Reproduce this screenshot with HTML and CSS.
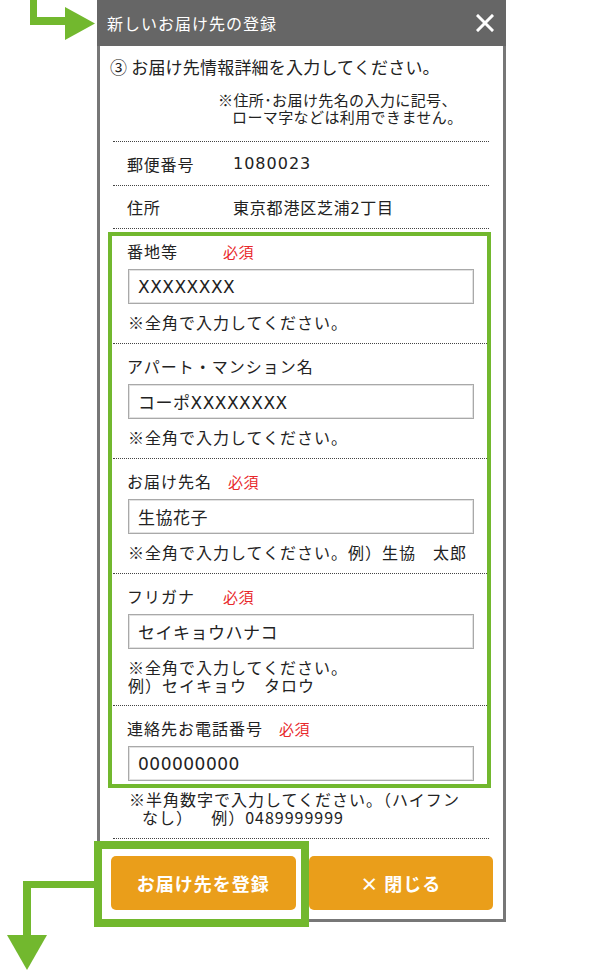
FILE: index.html
```html
<!DOCTYPE html>
<html lang="ja">
<head>
<meta charset="utf-8">
<title>新しいお届け先の登録</title>
<link rel="stylesheet" href="styles.css">
</head>
<body>
<div class="page">
  <div class="modal">
    <div class="modal-head">
      <span class="modal-title">新しいお届け先の登録</span>
      <svg class="close-icon" width="18" height="18" viewBox="0 0 18 18"><path d="M2 2L16 16M16 2L2 16" stroke="#fff" stroke-width="3" stroke-linecap="square"/></svg>
    </div>
    <div class="modal-body">
      <div class="content">
        <p class="intro">③ お届け先情報詳細を入力してください。</p>
        <p class="caution">※住所･お届け先名の入力に記号、<br>ローマ字などは利用できません。</p>

        <div class="info-row"><span class="info-label">郵便番号</span><span class="info-value num">1080023</span></div>
        <div class="info-row info-row-2"><span class="info-label">住所</span><span class="info-value">東京都港区芝浦2丁目</span></div>

        <div class="field">
          <div class="field-label"><span class="label-text">番地等</span><span class="req">必須</span></div>
          <input class="field-input" type="text" value="XXXXXXXX">
          <p class="field-note">※全角で入力してください。</p>
        </div>
        <div class="field">
          <div class="field-label"><span class="label-text">アパート・マンション名</span></div>
          <input class="field-input" type="text" value="コーポXXXXXXXX">
          <p class="field-note">※全角で入力してください。</p>
        </div>
        <div class="field">
          <div class="field-label"><span class="label-text">お届け先名</span><span class="req">必須</span></div>
          <input class="field-input" type="text" value="生協花子">
          <p class="field-note">※全角で入力してください。例）生協　太郎</p>
        </div>
        <div class="field field-two-line">
          <div class="field-label"><span class="label-text">フリガナ</span><span class="req">必須</span></div>
          <input class="field-input" type="text" value="セイキョウハナコ">
          <p class="field-note">※全角で入力してください。<br>例）セイキョウ　タロウ</p>
        </div>
        <div class="field field-last">
          <div class="field-label"><span class="label-text">連絡先お電話番号</span><span class="req">必須</span></div>
          <input class="field-input" type="text" value="000000000">
          <p class="field-note field-note-hang">※半角数字で入力してください。（ハイフン<br>なし）　&nbsp;&nbsp;例）0489999999</p>
        </div>
      </div>
      <div class="actions">
        <button class="btn" type="button">お届け先を登録</button>
        <button class="btn" type="button">× 閉じる</button>
      </div>
    </div>
  </div>

  <svg class="arrow-top" width="100" height="45" viewBox="0 0 100 45"><path d="M30 0H37V17H66V25H30Z" fill="#72b82e"/><path d="M65 7L95 23.5L65 40Z" fill="#72b82e"/></svg>
  <div class="mark-fields"></div>
  <div class="mark-button"></div>
  <svg class="arrow-bottom" width="100" height="100" viewBox="0 0 100 100"><path d="M23 0H96V7H31V56H23Z" fill="#72b82e"/><path d="M7 54H47L27 89Z" fill="#72b82e"/></svg>
</div>
</body>
</html>
```
FILE: styles.css
```css
* { box-sizing: border-box; }
html, body { margin: 0; padding: 0; background: #fff; }
body {
  font-family: "Noto Sans CJK JP", "Noto Sans", sans-serif;
  color: #222;
}
.page {
  position: relative;
  width: 600px;
  height: 977px;
  padding-left: 97px;
}
.modal { width: 409px; }
.modal-head {
  height: 46px;
  background: #666;
  display: flex;
  align-items: center;
  justify-content: space-between;
  padding: 0 12px 0 10px;
}
.modal-title {
  color: #fff;
  font-size: 16px;
  letter-spacing: 1px;
  line-height: 22px;
}
.close-icon { display: block; }
.modal-body {
  border: 3px solid #777;
  border-top: 0;
  background: #fff;
}
.content { padding: 0 14px 0 13px; }
.intro {
  margin: 0 0 0 -3px;
  padding-top: 10px;
  font-size: 17px;
  line-height: 22px;
  letter-spacing: 0.2px;
}
.caution {
  margin: 13px 0 0 105px;
  padding: 0 0 16px 14px;
  text-indent: -14px;
  font-size: 15px;
  line-height: 17px;
  letter-spacing: 0.4px;
  white-space: nowrap;
}
.info-row {
  border-top: 1px dotted #444;
  height: 44px;
  display: flex;
  align-items: center;
  padding-left: 14px;
  font-size: 16px;
  letter-spacing: 0.8px;
}
.info-row-2 { height: 43px; }
.info-label { width: 106px; }
.num {
  font-family: "DejaVu Sans", "Noto Sans CJK JP", sans-serif;
  font-size: 16px;
  letter-spacing: 1px;
}
.field {
  border-top: 1px dotted #444;
  padding: 11px 0 12px 14px;
}
.field-two-line { padding-bottom: 11px; }
.field-last { border-bottom: 1px dotted #444; }
.field-label {
  display: flex;
  align-items: center;
  height: 22px;
  font-size: 16px;
  letter-spacing: 1px;
}
.label-text { min-width: 80px; }
.req {
  margin-left: 16px;
  color: #e8282b;
  font-size: 15px;
  letter-spacing: 0.5px;
}
.field-input {
  display: block;
  margin: 7px 0 0 1px;
  width: 346px;
  height: 35px;
  border: 1px solid #a9a9a9;
  box-shadow: inset 0 0 0 1px #e2e2e2;
  padding: 0 0 0 9px;
  font-family: "DejaVu Sans", "Noto Sans CJK JP", sans-serif;
  font-size: 17px;
  letter-spacing: 0.5px;
  color: #222;
  background: #fff;
  outline: none;
}
.field-note {
  margin: 9px 0 0 1px;
  font-size: 16px;
  line-height: 18px;
  letter-spacing: 1px;
}
.field-note-hang {
  margin-left: 2px;
  padding-left: 13px;
  text-indent: -13px;
  white-space: nowrap;
}
.actions {
  display: grid;
  grid-template-columns: 1fr 1fr;
  gap: 13px;
  padding: 17px 10px 9px 11px;
}
.btn {
  height: 54px;
  border: 0;
  border-radius: 5px;
  background: #ea9e1a;
  color: #fff;
  font-family: "Noto Sans CJK JP", "Noto Sans", sans-serif;
  font-weight: 700;
  font-size: 18px;
  letter-spacing: 1px;
}
.arrow-top { position: absolute; left: 0; top: 0; }
.arrow-bottom { position: absolute; left: 0; top: 881px; }
.mark-fields {
  position: absolute;
  left: 108px;
  top: 232px;
  width: 383px;
  height: 556px;
  border: 4px solid #72b82e;
}
.mark-button {
  position: absolute;
  left: 94px;
  top: 841px;
  width: 215px;
  height: 86px;
  border: 8px solid #72b82e;
}
```
